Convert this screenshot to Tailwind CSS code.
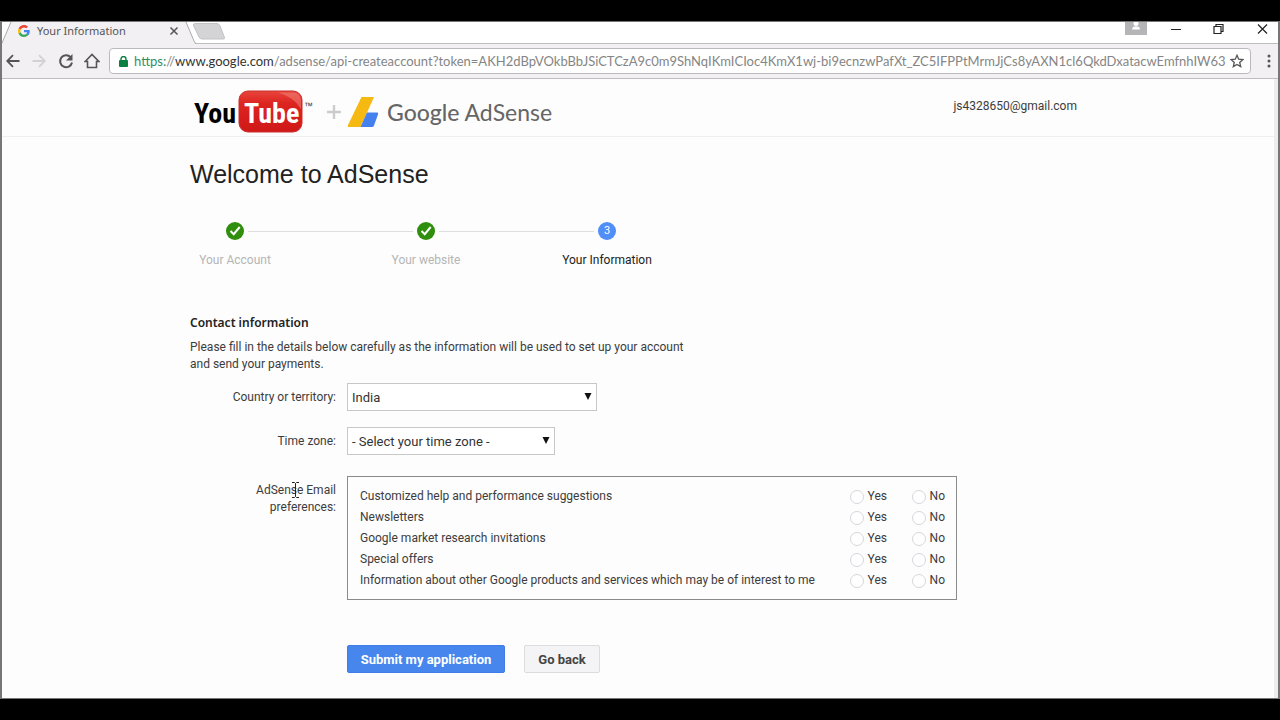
<!DOCTYPE html>
<html lang="en">
<head>
  <meta charset="UTF-8" />
  <meta name="viewport" content="width=device-width, initial-scale=1.0"/>
  <title>Your Information</title>
  <script src="https://cdn.jsdelivr.net/npm/@tailwindcss/browser@4"></script>
</head>
<body class="min-h-screen flex flex-col bg-black py-[21px] text-[12px] leading-[17px] text-[#3c3c3c] font-[Roboto,Arial,sans-serif]">

  <div class="flex-1 flex flex-col bg-[#fdfdfd] border-t border-b border-l-2 border-r-2 border-[#777]">

    <!-- tab strip -->
    <div class="flex items-start h-[21px] bg-white">
      <div class="relative flex items-center w-[191px] h-[22px] pl-4 pr-[14px] pb-[5px]">
        <svg class="absolute left-0 top-0" width="194" height="22" viewBox="0 0 194 22">
          <path d="M0 22 L9 0 H184 L193 22 Z" fill="#f2f0f3"/>
          <path d="M0 21 L9 0 M184 0 L192 19 Q193 21.500 194 21.500" fill="none" stroke="#aaa8ac"/>
        </svg>
        <svg class="relative" width="12" height="12" viewBox="0 0 48 48">
          <path fill="#ea4335" d="M24 9.500c3.500 0 6.700 1.200 9.200 3.600l6.900-6.900C35.900 2.400 30.500 0 24 0 14.600 0 6.500 5.400 2.600 13.200l8 6.200C12.400 13.700 17.700 9.500 24 9.500z"/>
          <path fill="#4285f4" d="M47 24.600c0-1.600-.2-3.100-.4-4.600H24v9h12.900c-.6 3-2.300 5.500-4.800 7.200l7.700 6C44.400 38 47 31.800 47 24.600z"/>
          <path fill="#fbbc05" d="M10.500 28.600c-.5-1.500-.8-3-.8-4.600s.3-3.100.8-4.600l-8-6.200C.9 16.500 0 20.100 0 24s.9 7.500 2.600 10.800z"/>
          <path fill="#34a853" d="M24 48c6.500 0 11.900-2.100 15.900-5.800l-7.700-6c-2.200 1.500-4.900 2.300-8.200 2.300-6.300 0-11.600-4.200-13.500-9.900l-8 6.200C6.500 42.600 14.600 48 24 48z"/>
        </svg>
        <span class="relative flex-1 pl-[7px] text-[11px] text-[#555] font-['Noto_Sans',sans-serif]">Your Information</span>
        <button type="button" aria-label="Close tab" class="relative">
          <svg width="10" height="10" viewBox="0 0 10 10" fill="none" stroke="#555" stroke-width="1.500"><path d="M1.500 1.500l7 7M8.500 1.500l-7 7"/></svg>
        </button>
      </div>
      <button type="button" aria-label="New tab" class="-ml-px">
        <svg width="34" height="18" viewBox="0 0 34 18"><path d="M3 1.500H25Q27 1.500 28 4L32.500 15.500Q33 17 31 17H10Q8 17 7 15L1.500 3.500Q1 1.500 3 1.500z" fill="#d4d3d6" stroke="#c2c1c4"/></svg>
      </button>
      <div class="flex-1"></div>
      <div class="flex items-start">
        <button type="button" aria-label="Profile" class="mr-6">
          <svg width="22" height="13" viewBox="0 0 22 13"><rect width="22" height="13" fill="#b5b4b7"/><circle cx="11" cy="1.500" r="2.500" fill="#fff"/><path d="M7 7.500C7 5 9 4.500 11 4.500s4 .5 4 3z" fill="#fff"/></svg>
        </button>
        <button type="button" aria-label="Minimize" class="mr-8">
          <svg width="10" height="16" viewBox="0 0 10 16"><path d="M0 7.500H10" stroke="#222"/></svg>
        </button>
        <button type="button" aria-label="Restore" class="mr-[33px]">
          <svg width="11" height="16" viewBox="0 0 11 16" fill="none" stroke="#222" stroke-width="1.200"><path d="M1 4.500H8V11.500H1z"/><path d="M3 4.500V2.500H10V9.500H8"/></svg>
        </button>
        <button type="button" aria-label="Close" class="mr-[10px]">
          <svg width="11" height="16" viewBox="0 0 11 16" fill="none" stroke="#222" stroke-width="1.200"><path d="M1 2.500l9 9M10 2.500l-9 9"/></svg>
        </button>
      </div>
    </div>

    <!-- toolbar -->
    <div class="flex items-center h-9 bg-[#f2f0f3] border-t border-b border-[#bfbdc1] pl-1 pr-[7px]">
      <button type="button" aria-label="Back">
        <svg width="14" height="14" viewBox="0 0 14 14" fill="none" stroke="#555" stroke-width="1.800"><path d="M13.500 7H1.500M7 1.200L1.200 7 7 12.800"/></svg>
      </button>
      <button type="button" aria-label="Forward" class="ml-3">
        <svg width="14" height="14" viewBox="0 0 14 14" fill="none" stroke="#d2d1d4" stroke-width="1.800"><path d="M.5 7H12.500M7 1.200L12.800 7 7 12.800"/></svg>
      </button>
      <button type="button" aria-label="Reload" class="ml-3">
        <svg width="16" height="16" viewBox="0 0 16 16"><path d="M12.600 4.200A6 6 0 1 0 14 9.500" fill="none" stroke="#555" stroke-width="2"/><path d="M14.500 1v6.500H8z" fill="#555"/></svg>
      </button>
      <button type="button" aria-label="Home" class="ml-[10px]">
        <svg width="16" height="16" viewBox="0 0 16 16" fill="none" stroke="#555" stroke-width="1.600"><path d="M1.200 8.500L8 1.500l6.800 7H12.500V14.500H3.500V8.500z"/></svg>
      </button>
      <div class="flex-1 min-w-0 flex items-center h-[26px] ml-[9px] bg-white border border-[#bbb9bd] rounded-sm">
        <svg class="ml-[9px] shrink-0" width="9" height="11" viewBox="0 0 9 11"><rect y="4" width="9" height="7" rx="1" fill="#0b8043"/><path d="M2 4.500V3a2.500 2.500 0 0 1 5 0V4.500" fill="none" stroke="#0b8043" stroke-width="1.400"/></svg>
        <div role="textbox" aria-label="Address" contenteditable="true" spellcheck="false" class="flex-1 min-w-0 ml-[6px] overflow-hidden whitespace-nowrap outline-none text-[13px] leading-5 text-[#858585] font-[Lato,sans-serif]"><span class="text-[#2f8f62]">https:</span>//<span class="text-[#333]">www.google.com</span>/adsense/api-createaccount?token=AKH2dBpVOkbBbJSiCTCzA9c0m9ShNqIKmICIoc4KmX1wj-bi9ecnzwPafXt_ZC5IFPPtMrmJjCs8yAXN1cl6QkdDxatacwEmfnhIW63</div>
        <button type="button" aria-label="Bookmark" class="ml-[2px] mr-[6px]">
          <svg width="14" height="14" viewBox="0 0 14 14" fill="none" stroke="#555" stroke-width="1.300"><path d="M7 1.300l1.700 3.900 4.200.4-3.200 2.800 1 4.200L7 10.400l-3.700 2.200 1-4.200L1.100 5.600l4.200-.4z"/></svg>
        </button>
      </div>
      <button type="button" aria-label="Menu" class="ml-4">
        <svg width="4" height="14" viewBox="0 0 4 14" fill="#555"><circle cx="2" cy="2" r="1.500"/><circle cx="2" cy="7" r="1.500"/><circle cx="2" cy="12" r="1.500"/></svg>
      </button>
    </div>

    <div class="flex-1 border-r-4 border-[#ededef]">
      <header class="border-b border-[#efefef]">
        <div class="flex items-start justify-between max-w-[1075px] h-[57px] pl-[188px] pt-[10px]">
          <div class="flex items-center">
            <svg width="124" height="46" viewBox="0 0 124 46" role="img" aria-label="YouTube">
              <defs>
                <linearGradient id="tube" x1="0" y1="0" x2="0" y2="1">
                  <stop offset="0" stop-color="#e8453c"/>
                  <stop offset=".3" stop-color="#dc2420"/>
                  <stop offset="1" stop-color="#d01818"/>
                </linearGradient>
              </defs>
              <rect x="49" y="2" width="63" height="41" rx="9" fill="url(#tube)" stroke="#c9302c"/>
              <path d="M88 3.500H104Q110 4 111 11V20Q104 8 88 3.500z" fill="#f28b82" opacity=".5"/>
              <text x="4" y="34" font-family="Liberation Sans Narrow, Roboto Condensed, DejaVu Sans Condensed" font-weight="700" font-size="28" fill="#000">You</text>
              <text x="54" y="34" font-family="Liberation Sans Narrow, Roboto Condensed, DejaVu Sans Condensed" font-weight="700" font-size="28" fill="#fff">Tube</text>
              <text x="114" y="20" font-family="Liberation Sans" font-size="9" fill="#333">™</text>
            </svg>
            <svg class="ml-[13px]" width="14" height="14" viewBox="0 0 14 14"><path d="M0 7H14M7 0V14" stroke="#ccc" stroke-width="2.400"/></svg>
            <svg class="ml-[6px]" width="32" height="32" viewBox="0 0 32 32">
              <path d="M14.500 1H27L13.500 31H1Q.5 30 1 29z" fill="#f5b912"/>
              <path d="M20 16.500H30.500Q31.500 17 31 18.500L27 29.500Q26.400 31 25 31H13.500z" fill="#4481ee"/>
            </svg>
            <span class="ml-2 text-[23px] leading-8 text-[#666] font-['Lato',sans-serif]"><span class="font-medium">Google</span> AdSense</span>
          </div>
          <span class="pt-[9px]">js4328650@gmail.com</span>
        </div>
      </header>

      <main class="pl-[188px] pr-4 max-w-[971px]">
        <h1 class="pt-[22px] text-[25px] leading-[30px] text-[#222] font-['Liberation_Sans',Arial,sans-serif]">Welcome to AdSense</h1>

        <ol class="grid grid-cols-[90px_101px_90px_91px_90px] mt-[33px] items-start text-center whitespace-nowrap">
          <li class="flex flex-col items-center gap-3 text-[#b5b5b5]">
            <svg width="18" height="18" viewBox="0 0 18 18"><circle cx="9" cy="9" r="9" fill="#2f8e0b"/><path d="M4.500 9l3.200 3.200L13.700 5" fill="none" stroke="#fff" stroke-width="2"/></svg>
            Your Account
          </li>
          <li aria-hidden="true" class="h-px bg-[#dedede] mt-[9px] -mx-8"></li>
          <li class="flex flex-col items-center gap-3 text-[#b5b5b5]">
            <svg width="18" height="18" viewBox="0 0 18 18"><circle cx="9" cy="9" r="9" fill="#2f8e0b"/><path d="M4.500 9l3.200 3.200L13.700 5" fill="none" stroke="#fff" stroke-width="2"/></svg>
            Your website
          </li>
          <li aria-hidden="true" class="h-px bg-[#dedede] mt-[9px] -mx-8"></li>
          <li class="flex flex-col items-center gap-3 text-[#222]">
            <span class="w-[18px] h-[18px] rounded-full bg-[#4f8ff7] text-white text-[11px] leading-[18px]">3</span>
            Your Information
          </li>
        </ol>

        <h2 class="mt-[45px] font-semibold text-[#222] font-['Noto_Sans',sans-serif]">Contact information</h2>
        <p class="mt-2 max-w-[510px]">Please fill in the details below carefully as the information will be used to set up your account and send your payments.</p>

        <form class="grid grid-cols-[146px_1fr] gap-x-[11px] mt-[10px]">
          <label for="country" class="text-right mt-[6px]">Country or territory:</label>
          <div class="relative w-[250px] h-7">
            <select id="country" class="appearance-none w-full h-full pl-1 bg-white border border-[#c8c8c8] text-[13px] text-[#333]">
              <option>India</option>
            </select>
            <svg class="absolute right-[5px] top-[10px] pointer-events-none" width="8" height="7" viewBox="0 0 8 7"><path d="M.5 0h7L4 7z" fill="#111"/></svg>
          </div>

          <label for="timezone" class="text-right mt-[22px]">Time zone:</label>
          <div class="relative w-[208px] h-7 mt-4">
            <select id="timezone" class="appearance-none w-full h-full pl-1 bg-white border border-[#c8c8c8] text-[13px] text-[#333]">
              <option>- Select your time zone -</option>
            </select>
            <svg class="absolute right-[5px] top-[10px] pointer-events-none" width="8" height="7" viewBox="0 0 8 7"><path d="M.5 0h7L4 7z" fill="#111"/></svg>
          </div>

          <div class="relative text-right mt-[27px]">
            AdSense Email<br>preferences:
            <!-- text cursor -->
            <svg class="absolute left-[102px] top-0" width="7" height="16" viewBox="0 0 7 16" fill="none" stroke="#222"><path d="M0 .5H2.500L3.500 1.500L4.500 .5H7M3.500 1.500V14.500M0 15.500H2.500L3.500 14.500L4.500 15.500H7"/></svg>
          </div>
          <div class="mt-[21px] border border-[#8a8a8a] pl-3 pr-[11px] pt-[9px] pb-2">
            <table class="w-full">
              <tbody id="preferences"></tbody>
            </table>
          </div>

          <div class="col-start-2 flex gap-[19px] mt-[45px] text-[13px] font-bold">
            <button type="submit" class="w-[158px] h-7 rounded-xs border border-[#3f7de8] bg-[#4787ed] text-white">Submit my application</button>
            <button type="button" class="w-[76px] h-7 rounded-xs border border-[#dcdcdc] bg-[#f4f3f5] text-[#444]">Go back</button>
          </div>
        </form>
      </main>
    </div>
  </div>

  <script>
    const preferences = [
      'Customized help and performance suggestions',
      'Newsletters',
      'Google market research invitations',
      'Special offers',
      'Information about other Google products and services which may be of interest to me'
    ];

    const tbody = document.getElementById('preferences');

    preferences.forEach((text, i) => {
      const tr = document.createElement('tr');
      tr.className = "h-[21px]";
      tr.innerHTML = `
        <th scope="row" class="text-left font-normal">${text}</th>
        <td class="w-[62px]"><label class="flex items-center gap-1"><input type="radio" name="pref${i}" value="yes" class="appearance-none w-[14px] h-[14px] rounded-full border border-[#d6d6dc] bg-white checked:bg-[#4787ed]" />Yes</label></td>
        <td class="w-[33px]"><label class="flex items-center gap-1"><input type="radio" name="pref${i}" value="no" class="appearance-none w-[14px] h-[14px] rounded-full border border-[#d6d6dc] bg-white checked:bg-[#4787ed]" />No</label></td>
      `;
      tbody.appendChild(tr);
    });
  </script>
</body>
</html>
